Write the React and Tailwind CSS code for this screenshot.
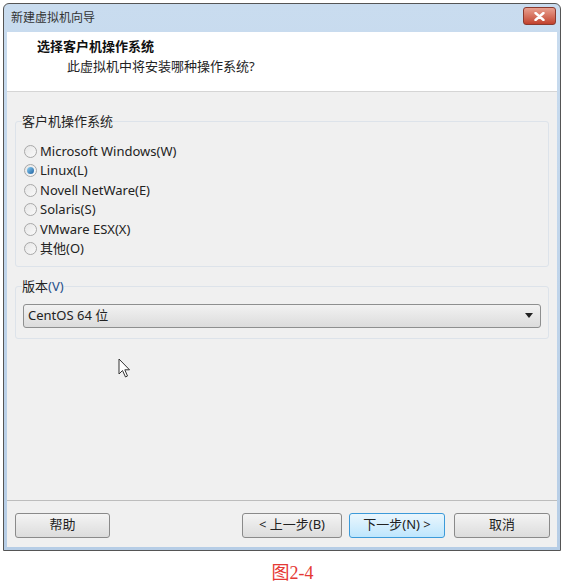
const font = { fontFamily: '"Noto Sans", "Noto Sans CJK SC", sans-serif' };

const systems = [
  "Microsoft Windows(W)",
  "Linux(L)",
  "Novell NetWare(E)",
  "Solaris(S)",
  "VMware ESX(X)",
  "其他(O)",
];

function Radio({ checked, label }) {
  return (
    <div className="flex items-center h-[19.5px]">
      <span className="w-[13px] h-[13px] rounded-full border border-[#a8a8a8] bg-gradient-to-br from-[#e6e6e6] to-[#fafafa] flex items-center justify-center">
        {checked && (
          <span className="w-[7px] h-[7px] rounded-full bg-gradient-to-br from-[#8fd3f5] to-[#1c5f9e]" />
        )}
      </span>
      <span className="ml-[3px] text-[13px] text-[#222]">{label}</span>
    </div>
  );
}

function Btn({ children, primary, className = "" }) {
  return (
    <button
      className={
        "h-[25px] rounded-[3px] border text-[13px] text-[#222] " +
        (primary
          ? "border-[#3c9ad9] bg-gradient-to-b from-[#eaf6fd] to-[#bee6fd] "
          : "border-[#8a8a8a] bg-gradient-to-b from-[#f4f4f4] to-[#dcdcdc] ") +
        className
      }
    >
      {children}
    </button>
  );
}

export default function App() {
  return (
    <div className="w-[565px] h-[582px] bg-white relative overflow-hidden" style={font}>
      <div className="pt-[3px] pl-[3px] w-[561px]">
        <div className="border border-[#555] rounded-t-[6px] bg-gradient-to-b from-[#c9dcef] to-[#b6cde6] px-[3px] pb-[3px]">
          <div className="h-[28px] flex items-center justify-between">
            <span className="ml-[4px] text-[12px] text-[#333]">新建虚拟机向导</span>
            <span className="w-[33px] h-[18px] mt-[-4px] mr-[1px] rounded-[3px] border border-[#8a3a2e] bg-gradient-to-b from-[#e8a090] to-[#c1402c] flex items-center justify-center">
              <svg width="11" height="9" viewBox="0 0 11 9">
                <path d="M1.5 1 L9.5 8 M9.5 1 L1.5 8" stroke="white" strokeWidth="2.4" strokeLinecap="round" />
              </svg>
            </span>
          </div>
          <div className="bg-white h-[60px] border-b border-[#d5d5d5] pl-[30px] pt-[4px]">
            <div className="text-[13px] font-bold text-[#111] leading-[20px]">选择客户机操作系统</div>
            <div className="pl-[30px] text-[13px] text-[#222] leading-[20px]">此虚拟机中将安装哪种操作系统?</div>
          </div>
          <div className="bg-[#f0f0f0] h-[409px] px-[8px] pt-[20px] relative border-b border-[#bdbdbd]">
            <fieldset className="border border-[#dde3ea] rounded-[3px] px-[7px] pb-[8px] h-[155px]">
              <legend className="text-[13px] text-[#222] ml-[-1px]">客户机操作系统</legend>
              <div className="pt-[10px] pl-[1px]">
                {systems.map((s, i) => (
                  <Radio key={s} checked={i === 1} label={s} />
                ))}
              </div>
            </fieldset>
            <fieldset className="mt-[10px] border border-[#dde3ea] rounded-[3px] px-[7px] h-[62px]">
              <legend className="text-[13px] text-[#222] ml-[-1px]">
                版本<span className="text-[#1f4f8a]">(V)</span>
              </legend>
              <div className="mt-[7px] h-[24px] rounded-[3px] border border-[#8e8f8f] bg-gradient-to-b from-[#f2f2f2] to-[#dcdcdc] flex items-center justify-between px-[4px]">
                <span className="text-[13px] text-[#222]">CentOS 64 位</span>
                <svg width="8" height="5" viewBox="0 0 8 5" className="mr-[3px]">
                  <path d="M0 0 H8 L4 5 Z" fill="#222" />
                </svg>
              </div>
            </fieldset>
            <svg width="14" height="20" viewBox="0 0 14 20" className="absolute left-[111px] top-[266px]">
              <path d="M1 1 V16 L4.5 12.5 L7.5 19 L9.5 18 L6.8 11.8 L11.5 11.8 Z" fill="white" stroke="#333" strokeWidth="1" strokeLinejoin="round" />
            </svg>
          </div>
          <div className="bg-[#f0f0f0] h-[46px] flex items-center pl-[8px] pr-[7px] pt-[2px]">
            <Btn className="w-[95px]">帮助</Btn>
            <div className="flex-1" />
            <Btn className="w-[100px]">&lt; 上一步(B)</Btn>
            <Btn primary className="w-[96px] ml-[7px]">下一步(N) &gt;</Btn>
            <Btn className="w-[96px] ml-[9px]">取消</Btn>
          </div>
        </div>
      </div>
      <div
        className="absolute left-0 right-0 top-[564px] text-center text-[18px] leading-[18px] text-[#e53935] pl-[20px]"
        style={{ fontFamily: '"Liberation Serif", "Noto Sans CJK SC", serif' }}
      >
        图2-4
      </div>
    </div>
  );
}
